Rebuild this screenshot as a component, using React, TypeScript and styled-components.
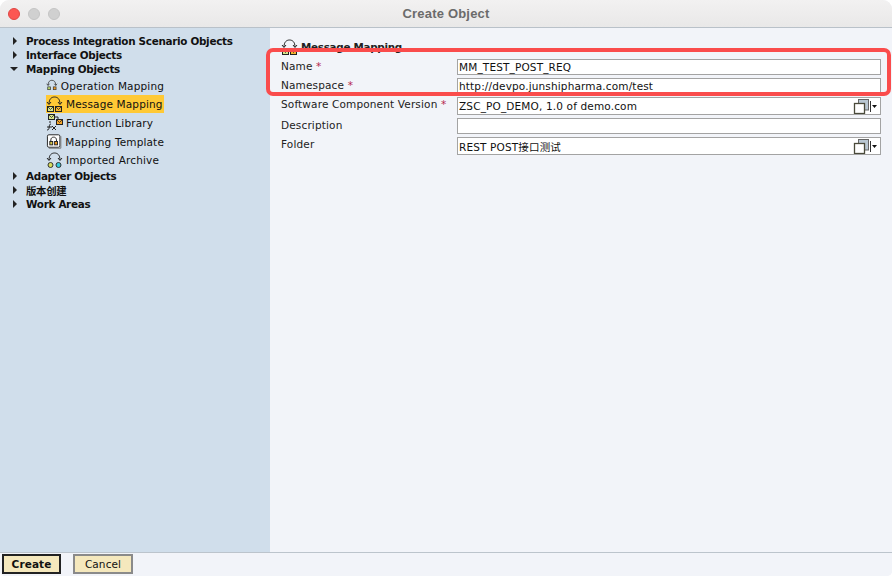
import React from "react";
import styled, { createGlobalStyle } from "styled-components";

const Global = createGlobalStyle`
  html, body { margin: 0; padding: 0; background: #fff; }
  body { font-family: "DejaVu Sans", "Noto Sans CJK SC", sans-serif; font-size: 10.5px; color: #111; }
`;

const Window = styled.div`
  position: relative;
  width: 892px;
  height: 576px;
  display: flex;
  flex-direction: column;
  overflow: hidden;
  border-radius: 9px 9px 5px 5px;
  background: #f2f4f9;
`;

const TitleBar = styled.div`
  height: 28px;
  flex: none;
  box-sizing: border-box;
  display: flex;
  align-items: center;
  position: relative;
  padding-left: 8px;
  gap: 8px;
  background: linear-gradient(#f2f1f1, #e9e8e8);
  border-bottom: 1px solid #b9c1c9;
`;

const Light = styled.span<{ $color: string; $edge: string }>`
  width: 12px;
  height: 12px;
  border-radius: 50%;
  box-sizing: border-box;
  background: ${(p) => p.$color};
  border: 1px solid ${(p) => p.$edge};
`;

const Title = styled.div`
  position: absolute;
  left: 0;
  right: 0;
  text-align: center;
  font-family: "Liberation Sans", sans-serif;
  font-weight: 700;
  font-size: 13px;
  letter-spacing: 0.2px;
  color: #6b6b6b;
`;

const Body = styled.div`
  flex: 1;
  display: flex;
  min-height: 0;
`;

const Sidebar = styled.div`
  width: 270px;
  flex: none;
  box-sizing: border-box;
  padding-top: 6px;
  background: #d0deeb;
`;

const TopRow = styled.div`
  height: 14px;
  display: flex;
  align-items: center;
  padding-left: 12px;
  font-weight: 700;
  font-size: 10.4px;
  letter-spacing: -0.3px;
  white-space: nowrap;
`;

const Arrow = styled.span<{ $open?: boolean }>`
  width: 14px;
  flex: none;
  &::before {
    content: "";
    display: block;
    width: 0;
    height: 0;
    ${(p) =>
      p.$open
        ? `border-left: 4px solid transparent; border-right: 4px solid transparent; border-top: 4px solid #222; margin-left: -2px;`
        : `border-top: 4px solid transparent; border-bottom: 4px solid transparent; border-left: 4px solid #222; margin-left: 1px;`}
  }
`;

const ChildList = styled.div`
  display: flex;
  flex-direction: column;
  padding-left: 46px;
`;

const Child = styled.div<{ $selected?: boolean; $height: number }>`
  height: ${(p) => p.$height}px;
  width: 118px;
  display: flex;
  align-items: center;
  gap: 3px;
  white-space: nowrap;
  letter-spacing: 0.15px;
  background: ${(p) => (p.$selected ? "#ffc935" : "transparent")};
`;

const Main = styled.div`
  flex: 1;
  box-sizing: border-box;
  padding: 12px 11px 0 11px;
`;

const Heading = styled.div`
  height: 14px;
  display: flex;
  align-items: center;
  gap: 3px;
  font-weight: 700;
  font-size: 10.4px;
  letter-spacing: -0.3px;
  color: #222;
  margin-bottom: 5px;
`;

const FormRow = styled.div<{ $height: number; $gap: number }>`
  height: ${(p) => p.$height}px;
  margin-bottom: ${(p) => p.$gap}px;
  display: flex;
  align-items: flex-start;
`;

const Label = styled.div`
  width: 176px;
  flex: none;
  line-height: 13px;
  padding-top: 1px;
  letter-spacing: 0.15px;
  color: #222;
`;

const Star = styled.span`
  color: #b5294e;
`;

const Field = styled.div`
  flex: 1;
  height: 100%;
  box-sizing: border-box;
  display: flex;
  align-items: center;
  justify-content: space-between;
  padding: 0 1px 0 1px;
  background: #fff;
  border: 1px solid #a3a3a3;
  letter-spacing: 0.15px;
  white-space: nowrap;
`;

const FieldTools = styled.span`
  display: flex;
  align-items: center;
  flex: none;
`;

const Footer = styled.div`
  height: 24px;
  flex: none;
  box-sizing: border-box;
  display: flex;
  align-items: flex-start;
  gap: 12px;
  padding: 1px 0 0 2px;
  background: #f2f4f9;
  border-top: 1px solid #bcc4cc;
`;

const Button = styled.button<{ $primary?: boolean }>`
  width: ${(p) => (p.$primary ? 59 : 60)}px;
  height: 20px;
  padding: 0;
  box-sizing: border-box;
  background: #f5e8bd;
  font-family: inherit;
  font-size: 10.5px;
  letter-spacing: 0.1px;
  color: #111;
  font-weight: ${(p) => (p.$primary ? 700 : 400)};
  border: 2px solid ${(p) => (p.$primary ? "#222" : "#8a8a8a")};
`;

const Annotation = styled.div`
  position: absolute;
  left: 266px;
  top: 48px;
  width: 625px;
  height: 48px;
  box-sizing: border-box;
  border: 4px solid #fa4c4c;
  border-radius: 7px;
`;

const Hanger = () => (
  <path d="M3 8 C3 3 5.5 1 8.5 1 C11.5 1 14 3 14 8 M1 6 L3 8.5 L5 6 M12 6 L14 8.5 L16 6" fill="none" stroke="#222" strokeWidth="1" />
);

const OperationIcon = () => (
  <svg width="17" height="17" viewBox="0 0 17 17">
    <Hanger />
    <rect x="2.5" y="10.5" width="4" height="4" fill="#b9d76a" stroke="#333" />
    <rect x="10.5" y="10.5" width="4" height="4" fill="#f29a1e" stroke="#333" />
  </svg>
);

const Envelope = ({ x, y, fill }: { x: number; y: number; fill: string }) => (
  <g>
    <rect x={x + 0.5} y={y + 0.5} width="6" height="5" fill={fill} stroke="#222" />
    <path d={`M${x + 1} ${y + 1} L${x + 3.5} ${y + 3.5} L${x + 6} ${y + 1}`} fill="none" stroke="#222" strokeWidth="0.8" />
  </g>
);

const MessageIcon = () => (
  <svg width="17" height="17" viewBox="0 0 17 17">
    <Hanger />
    <Envelope x={1} y={10} fill="#d6e58a" />
    <Envelope x={9} y={10} fill="#f5b52e" />
  </svg>
);

const FunctionIcon = () => (
  <svg width="17" height="17" viewBox="0 0 17 17">
    <Envelope x={2} y={0} fill="#d6e58a" />
    <Envelope x={10} y={5} fill="#f5a52a" />
    <path d="M9 3 H12 V5" fill="none" stroke="#222" />
    <path d="M4 7 V9 M1 13 H6 M5 10 C3.5 10 3.5 11 3.2 13 C3 15 2.8 16 1 16 M6 12 L10 16 M10 12 L6 16" fill="none" stroke="#222" />
  </svg>
);

const TemplateIcon = () => (
  <svg width="17" height="17" viewBox="0 0 17 17">
    <rect x="1.5" y="1.5" width="13" height="13" rx="1.5" fill="#fff" stroke="#222" />
    <path d="M15.5 3 V15.5 H3" fill="none" stroke="#777" />
    <path d="M5 8 C5 4.5 6.5 4 8 4 C9.5 4 11 4.5 11 8" fill="none" stroke="#222" />
    <rect x="4" y="8.5" width="3" height="3.5" fill="#d6c84a" stroke="#222" />
    <rect x="9" y="8.5" width="3" height="3.5" fill="#f29a1e" stroke="#222" />
  </svg>
);

const ArchiveIcon = () => (
  <svg width="17" height="17" viewBox="0 0 17 17">
    <Hanger />
    <circle cx="4.5" cy="13" r="2.5" fill="#d6dc5a" stroke="#333" />
    <circle cx="12.5" cy="13" r="2.5" fill="#33c9dc" stroke="#333" />
  </svg>
);

const PickerIcon = () => (
  <svg width="28" height="15" viewBox="0 0 28 15">
    <rect x="7.5" y="0.5" width="10" height="10.5" fill="#b9c7d2" stroke="#666" />
    <rect x="3.5" y="4.5" width="10" height="10" fill="#fff" stroke="#4a4a3a" strokeWidth="1.3" />
    <path d="M19.5 2 V13" stroke="#333" />
    <path d="M21 6 H26 L23.5 9 Z" fill="#111" />
  </svg>
);

const topBefore = ["Process Integration Scenario Objects", "Interface Objects"];
const topAfter = ["Adapter Objects", "版本创建", "Work Areas"];

export default function App() {
  return (
    <Window>
      <Global />
      <TitleBar>
        <Light $color="#fc5753" $edge="#df4744" />
        <Light $color="#d0d0d0" $edge="#c4c4c4" />
        <Light $color="#d0d0d0" $edge="#c4c4c4" />
        <Title>Create Object</Title>
      </TitleBar>
      <Body>
        <Sidebar>
          {topBefore.map((t) => (
            <TopRow key={t}>
              <Arrow />
              {t}
            </TopRow>
          ))}
          <TopRow>
            <Arrow $open />
            Mapping Objects
          </TopRow>
          <ChildList>
            <Child $height={19}>
              <OperationIcon />
              Operation Mapping
            </Child>
            <Child $height={18} $selected>
              <MessageIcon />
              Message Mapping
            </Child>
            <Child $height={19}>
              <FunctionIcon />
              Function Library
            </Child>
            <Child $height={19}>
              <TemplateIcon />
              Mapping Template
            </Child>
            <Child $height={18}>
              <ArchiveIcon />
              Imported Archive
            </Child>
          </ChildList>
          {topAfter.map((t) => (
            <TopRow key={t}>
              <Arrow />
              {t}
            </TopRow>
          ))}
        </Sidebar>
        <Main>
          <Heading>
            <MessageIcon />
            Message Mapping
          </Heading>
          <FormRow $height={16} $gap={3}>
            <Label>
              Name <Star>*</Star>
            </Label>
            <Field>MM_TEST_POST_REQ</Field>
          </FormRow>
          <FormRow $height={15} $gap={4}>
            <Label>
              Namespace <Star>*</Star>
            </Label>
            <Field>http://devpo.junshipharma.com/test</Field>
          </FormRow>
          <FormRow $height={18} $gap={3}>
            <Label>
              Software Component Version <Star>*</Star>
            </Label>
            <Field>
              ZSC_PO_DEMO, 1.0 of demo.com
              <FieldTools>
                <PickerIcon />
              </FieldTools>
            </Field>
          </FormRow>
          <FormRow $height={16} $gap={3}>
            <Label>Description</Label>
            <Field />
          </FormRow>
          <FormRow $height={18} $gap={0}>
            <Label>Folder</Label>
            <Field>
              REST POST接口测试
              <FieldTools>
                <PickerIcon />
              </FieldTools>
            </Field>
          </FormRow>
        </Main>
      </Body>
      <Footer>
        <Button $primary>Create</Button>
        <Button>Cancel</Button>
      </Footer>
      <Annotation />
    </Window>
  );
}
